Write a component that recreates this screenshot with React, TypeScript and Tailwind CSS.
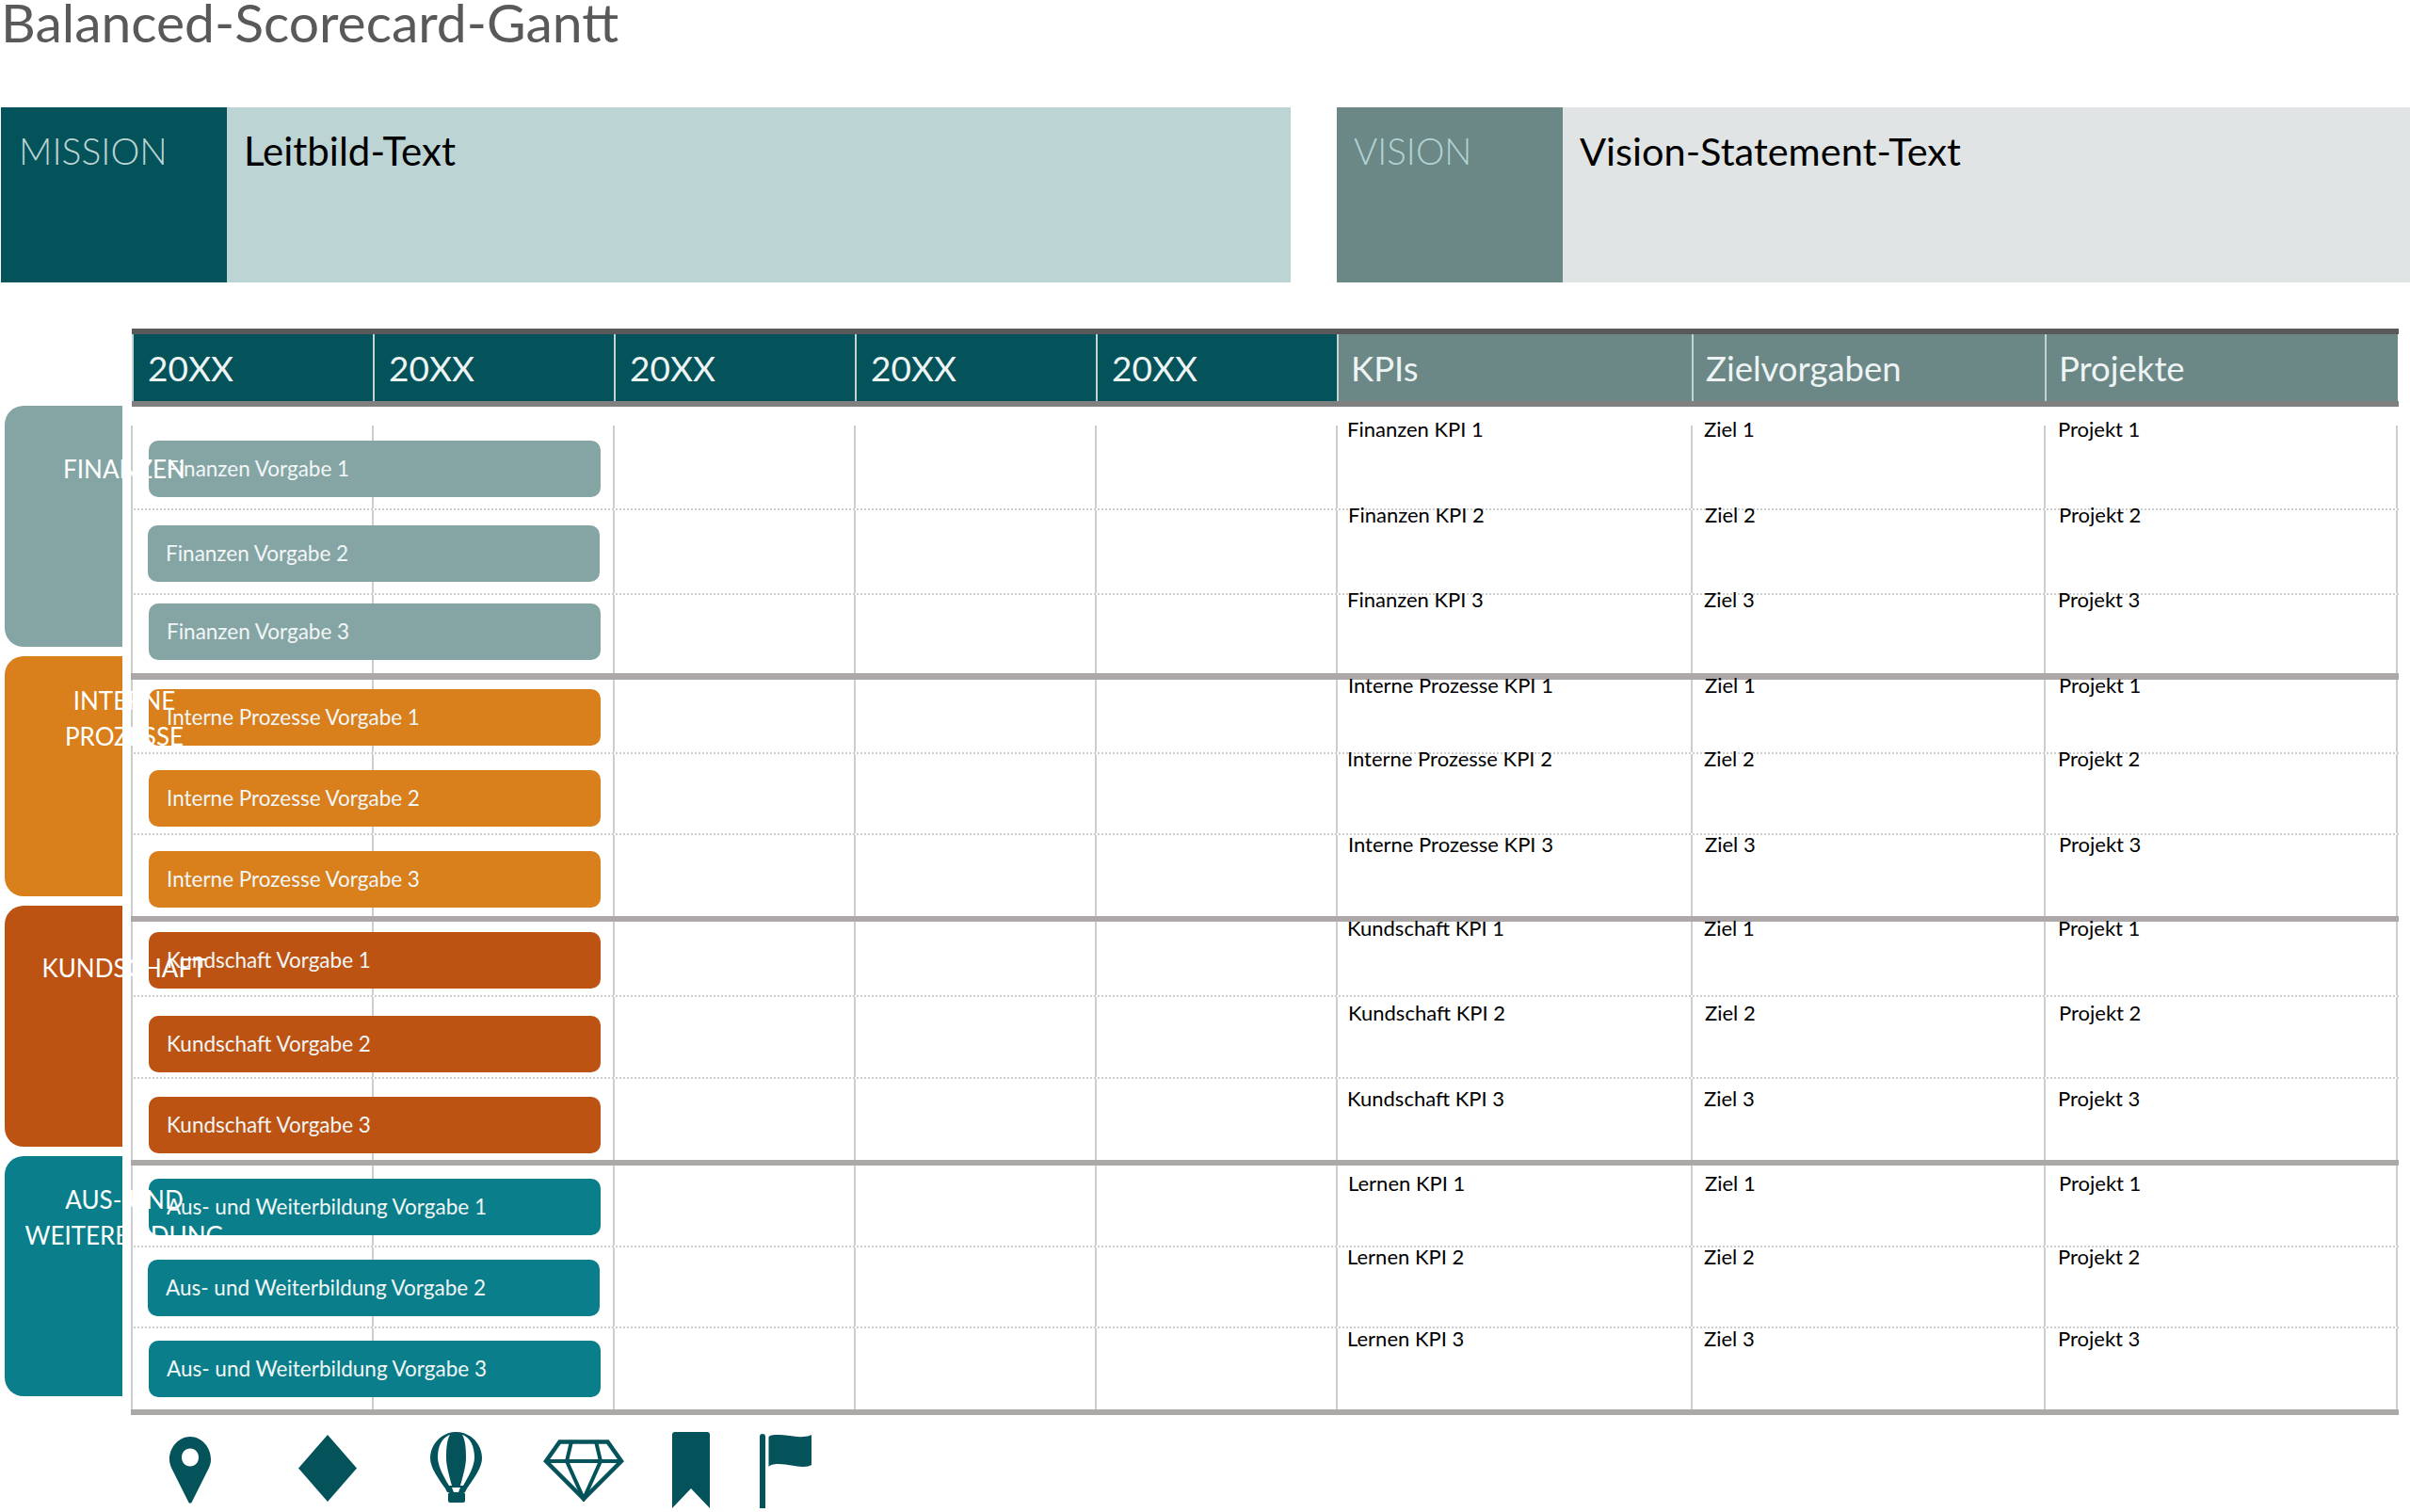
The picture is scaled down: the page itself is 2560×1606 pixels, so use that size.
import React from "react";

const DARK = "#04535b";

type Row = { row: string; bar: string; text: string; label: string; kpi: string; z: string; p: string };
type Section = { barColor: string; rows: Row[]; sep: string };

const sections: Section[] = [
  {
    barColor: "bg-[#85a5a5]",
    sep: "h-[7px]",
    rows: [
      { row: "h-[88px]", bar: "mt-[16px] ml-[17px]", text: "mt-[-10px]", label: "Finanzen Vorgabe 1", kpi: "Finanzen KPI 1", z: "Ziel 1", p: "Projekt 1" },
      { row: "h-[90px] border-t-2", bar: "mt-[16px] ml-[16px]", text: "mt-[-9px] ml-px", label: "Finanzen Vorgabe 2", kpi: "Finanzen KPI 2", z: "Ziel 2", p: "Projekt 2" },
      { row: "h-[85px] border-t-2", bar: "mt-[9px] ml-[17px]", text: "mt-[-9px]", label: "Finanzen Vorgabe 3", kpi: "Finanzen KPI 3", z: "Ziel 3", p: "Projekt 3" },
    ],
  },
  {
    barColor: "bg-[#d97f1c]",
    sep: "h-[6px]",
    rows: [
      { row: "h-[77px]", bar: "mt-[10px] ml-[17px]", text: "mt-[-8px] ml-px", label: "Interne Prozesse Vorgabe 1", kpi: "Interne Prozesse KPI 1", z: "Ziel 1", p: "Projekt 1" },
      { row: "h-[86px] border-t-2", bar: "mt-[17px] ml-[17px]", text: "mt-[-9px]", label: "Interne Prozesse Vorgabe 2", kpi: "Interne Prozesse KPI 2", z: "Ziel 2", p: "Projekt 2" },
      { row: "h-[88px] border-t-2", bar: "mt-[17px] ml-[17px]", text: "mt-[-4px] ml-px", label: "Interne Prozesse Vorgabe 3", kpi: "Interne Prozesse KPI 3", z: "Ziel 3", p: "Projekt 3" },
    ],
  },
  {
    barColor: "bg-[#bd5313]",
    sep: "h-[6px]",
    rows: [
      { row: "h-[78px]", bar: "mt-[11px] ml-[17px]", text: "mt-[-7px]", label: "Kundschaft Vorgabe 1", kpi: "Kundschaft KPI 1", z: "Ziel 1", p: "Projekt 1" },
      { row: "h-[87px] border-t-2", bar: "mt-[20px] ml-[17px]", text: "mt-[3px] ml-px", label: "Kundschaft Vorgabe 2", kpi: "Kundschaft KPI 2", z: "Ziel 2", p: "Projekt 2" },
      { row: "h-[88px] border-t-2", bar: "mt-[19px] ml-[17px]", text: "mt-[7px]", label: "Kundschaft Vorgabe 3", kpi: "Kundschaft KPI 3", z: "Ziel 3", p: "Projekt 3" },
    ],
  },
  {
    barColor: "bg-[#0a7f8b]",
    sep: "h-[6px]",
    rows: [
      { row: "h-[85px]", bar: "mt-[14px] ml-[17px]", text: "mt-[5px] ml-px", label: "Aus- und Weiterbildung Vorgabe 1", kpi: "Lernen KPI 1", z: "Ziel 1", p: "Projekt 1" },
      { row: "h-[86px] border-t-2", bar: "mt-[13px] ml-[16px]", text: "mt-[-4px]", label: "Aus- und Weiterbildung Vorgabe 2", kpi: "Lernen KPI 2", z: "Ziel 2", p: "Projekt 2" },
      { row: "h-[88px] border-t-2", bar: "mt-[13px] ml-[17px]", text: "mt-[-3px]", label: "Aus- und Weiterbildung Vorgabe 3", kpi: "Lernen KPI 3", z: "Ziel 3", p: "Projekt 3" },
    ],
  },
];

const TRACKS = "grid grid-cols-[256px_256px_256px_256px_256px_377px_375px_376px]";
const LINE = "border-l-2 border-[#cdcdcd]";

function Category({ color, pad, children }: { color: string; pad: string; children: React.ReactNode }) {
  return (
    <div className={`h-[255.5px] w-[125px] rounded-l-[20px] ${color} ${pad}`}>
      <div className="w-[254px] text-center text-[26px] leading-[38px] whitespace-nowrap text-white">{children}</div>
    </div>
  );
}

function TableRow({ r, barColor }: { r: Row; barColor: string }) {
  return (
    <div className={`${TRACKS} ${r.row} border-dotted border-[#cdcdcd]`}>
      <div className={LINE}>
        <div className={`relative flex h-[60px] w-[480px] items-center rounded-[10px] pl-[19px] text-[22.5px] text-[#f2f6f6] ${barColor} ${r.bar}`}>
          {r.label}
        </div>
      </div>
      <div className={LINE} />
      <div className={LINE} />
      <div className={LINE} />
      <div className={LINE} />
      <div className={`${LINE} pl-[10px]`}>
        <div className={`relative text-[22px] leading-[28px] text-black ${r.text}`}>{r.kpi}</div>
      </div>
      <div className={`${LINE} pl-[12px]`}>
        <div className={`relative text-[22px] leading-[28px] text-black ${r.text}`}>{r.z}</div>
      </div>
      <div className={`${LINE} pl-[13px] border-r-2`}>
        <div className={`relative text-[22px] leading-[28px] text-black ${r.text}`}>{r.p}</div>
      </div>
    </div>
  );
}

function HeaderCell({ children, style }: { children: string; style: string }) {
  return (
    <div className={`flex h-[71px] items-center border-l-2 border-[#c3d2d2] pt-[1px] text-[#eef4f4] ${style}`}>{children}</div>
  );
}

export default function App() {
  return (
    <div className="h-[1606px] w-[2560px] overflow-hidden bg-white font-['Lato',sans-serif]">
      <div className="h-[114px] pl-[1px] text-[57px] leading-[46px] text-[#595959]">Balanced-Scorecard-Gantt</div>

      <div className="flex h-[186px] pl-[1px]">
        <div className="w-[240px] bg-[#04535b] pl-[19px] pt-[18px] text-[39px] leading-[56px] font-light text-[#bcd4d4]">MISSION</div>
        <div className="w-[1130px] bg-[#bcd4d4] pl-[18px] pt-[18px] text-[42px] leading-[56px] text-black">Leitbild-Text</div>
        <div className="ml-[49px] w-[240px] bg-[#6b8886] pl-[18px] pt-[18px] text-[38.5px] leading-[56px] font-light text-[#b2d2d2]">VISION</div>
        <div className="w-[900px] bg-[#e0e4e4] pl-[18px] pt-[18px] text-[41.5px] leading-[56px] text-black">Vision-Statement-Text</div>
      </div>

      <div className="mt-[49px] ml-[140px] w-[2408px] border-y-[6px] border-t-[#595959] border-b-[#808080]">
        <div className="grid grid-cols-[256px_256px_256px_256px_256px_377px_375px_375px]">
          {["20XX", "20XX", "20XX", "20XX", "20XX"].map((t, i) => (
            <HeaderCell key={i} style="bg-[#04535b] pl-[15px] text-[37px]">{t}</HeaderCell>
          ))}
          {["KPIs", "Zielvorgaben", "Projekte"].map((t) => (
            <HeaderCell key={t} style="bg-[#6b8886] pl-[13px] text-[36.5px]">{t}</HeaderCell>
          ))}
        </div>
      </div>

      <div className="flex items-start">
        <div className="relative z-10 -mt-px flex w-[139px] flex-col gap-[10px] pl-[5px]">
          <Category color="bg-[#85a5a5]" pad="pt-[48px]">FINANZEN</Category>
          <Category color="bg-[#d97f1c]" pad="pt-[28px]">INTERNE<br />PROZESSE</Category>
          <Category color="bg-[#bd5313]" pad="pt-[47px]">KUNDSCHAFT</Category>
          <Category color="bg-[#0a7f8b]" pad="pt-[27px]">AUS- UND<br />WEITERBILDUNG</Category>
        </div>
        <div className="w-[2409px] pt-[20px]">
          {sections.map((s, i) => (
            <div key={i}>
              {s.rows.map((r) => (
                <TableRow key={r.label} r={r} barColor={s.barColor} />
              ))}
              <div className={`relative ${s.sep} bg-[#aca8a8]`} />
            </div>
          ))}
        </div>
      </div>

      <div className="ml-[180px] flex h-[84px] items-start pt-[18px]">
        <svg width="44" height="71" viewBox="0 0 44 71" className="mt-[5px]" fill={DARK}>
          <path fillRule="evenodd" d="M22 0C34 0 44 11 44 24C44 28 43 30 42 33L23.5 70Q22 71.5 20.5 70L2 33C1 30 0 28 0 24C0 11 10 0 22 0ZM22 12.5C17 12.5 13 16.5 13 22S17 31.5 22 31.5S31 27.5 31 22S27 12.5 22 12.5Z" />
        </svg>
        <svg width="62" height="71" viewBox="0 0 62 71" className="ml-[93px] mt-[3px]" fill={DARK}>
          <polygon points="31,0 62,35.5 31,71 0,35.5" />
        </svg>
        <svg width="55" height="75" viewBox="0 0 55 75" className="ml-[78px]" fill={DARK}>
          <path d="M27.5 0C43 0 55 13 55 28C55 38 46 50 39 60L37 64H18L16 60C9 50 0 38 0 28C0 13 12 0 27.5 0Z" />
          <path fill="#fff" d="M21 3C12 6 8 16 8 27C8 36 14 47 20 57H23C20 46 17 36 17 27C17 16 18 8 21 3Z" />
          <path fill="#fff" d="M34 3C43 6 47 16 47 27C47 36 41 47 35 57H32C35 46 38 36 38 27C38 16 37 8 34 3Z" />
          <path fill="#fff" d="M23 59H32L30 64H25Z" />
          <rect x="19" y="64" width="18" height="11" rx="2" />
        </svg>
        <svg width="86" height="66" viewBox="0 0 86 66" className="ml-[65px] mt-[8px]" fill="none" stroke={DARK} strokeWidth="4.5" strokeLinejoin="miter">
          <polygon points="17.5,2.5 68.5,2.5 83,23 43,63 3,23" />
          <path d="M3 23H83M30 2L25 23L43 63L61 23L56 2" strokeWidth="4" />
        </svg>
        <svg width="40" height="81" viewBox="0 0 40 81" className="ml-[51px]" fill={DARK}>
          <path d="M3 0H37Q40 0 40 3V81L20 60L0 81V3Q0 0 3 0Z" />
        </svg>
        <svg width="55" height="79" viewBox="0 0 55 79" className="ml-[53px] mt-[2px]" fill={DARK}>
          <path d="M0 3Q0 0 3 0T6 3V79H0Z" />
          <path d="M9.5 4C9.5 2 12 1 20 1C30 1 38 4 46 3C50 3 53 2 55 1V33C53 34 50 35 46 35C38 35 30 32 20 32C14 32 11 33 9.5 35Z" />
        </svg>
      </div>
    </div>
  );
}
